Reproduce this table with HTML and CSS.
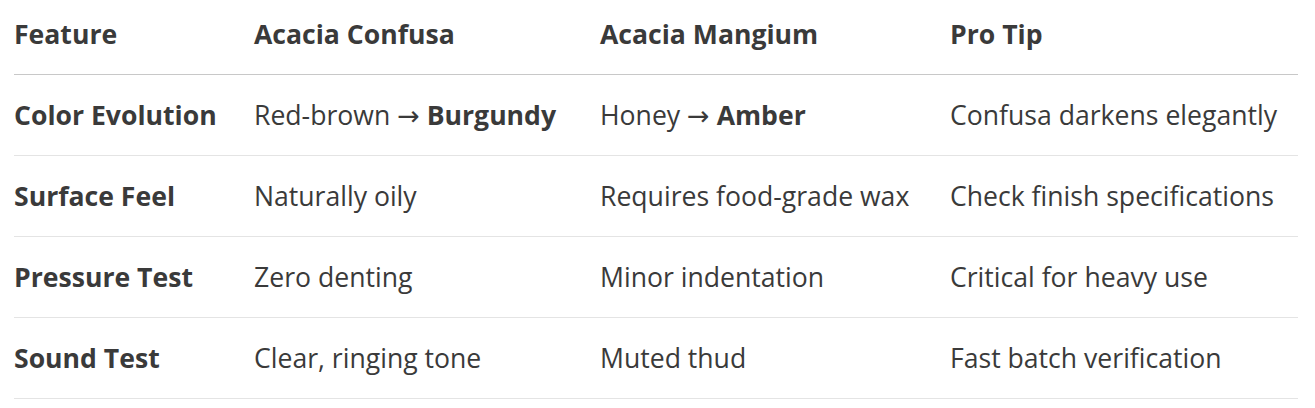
FILE: index.html
```html
<!DOCTYPE html>
<html>
<head>
<meta charset="utf-8">
<link rel="stylesheet" href="styles.css">
</head>
<body>
<table class="cmp">
  <colgroup>
    <col class="c1"><col class="c2"><col class="c3"><col class="c4">
  </colgroup>
  <thead>
    <tr><th>Feature</th><th>Acacia Confusa</th><th>Acacia Mangium</th><th>Pro Tip</th></tr>
  </thead>
  <tbody>
    <tr><td class="lbl">Color Evolution</td><td>Red-brown <span class="arr">→</span> <b>Burgundy</b></td><td>Honey <span class="arr">→</span> <b>Amber</b></td><td>Confusa darkens elegantly</td></tr>
    <tr><td class="lbl">Surface Feel</td><td>Naturally oily</td><td>Requires food-grade wax</td><td>Check finish specifications</td></tr>
    <tr><td class="lbl">Pressure Test</td><td>Zero denting</td><td>Minor indentation</td><td>Critical for heavy use</td></tr>
    <tr><td class="lbl">Sound Test</td><td>Clear, ringing tone</td><td>Muted thud</td><td>Fast batch verification</td></tr>
  </tbody>
</table>
</body>
</html>
```
FILE: styles.css
```css
html, body { margin: 0; padding: 0; background: #fff; }
body { padding: 0 17px 0 14px; }
.cmp {
  width: 100%;
  border-collapse: collapse;
  font-family: "Open Sans", "Noto Sans", sans-serif;
  font-size: 26.6px;
  color: #3a3a3a;
  table-layout: fixed;
}
.c1 { width: 240px; }
.c2 { width: 346px; }
.c3 { width: 350px; }
.cmp th, .cmp td { text-align: left; padding: 0; vertical-align: middle; white-space: nowrap; }
.cmp th { height: 74px; padding-bottom: 6px; box-sizing: border-box; font-weight: 700; border-bottom: 1px solid #c8c8c8; }
.cmp td { height: 81px; border-bottom: 1px solid #e4e4e4; box-sizing: border-box; }
.cmp td.lbl, .cmp b { font-weight: 700; }
.arr { font-family: "DejaVu Sans", sans-serif; font-size: 27px; line-height: 1; }
```
